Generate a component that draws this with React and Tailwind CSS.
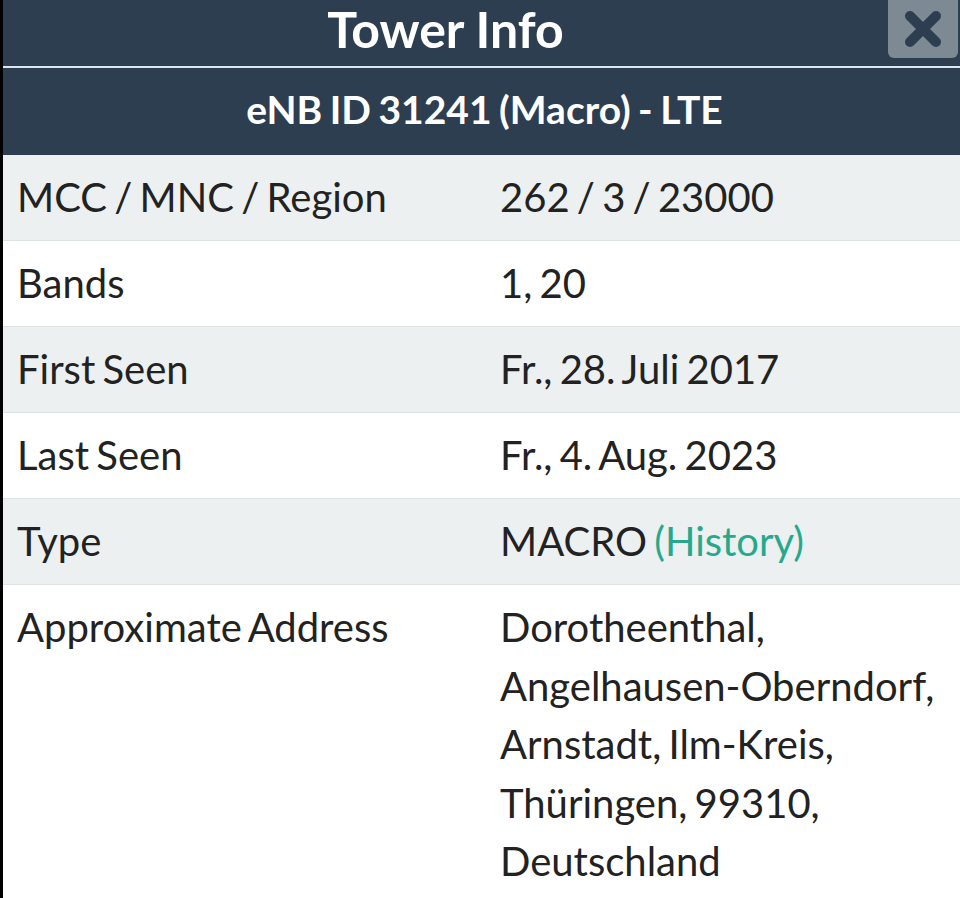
import React from 'react';

const rows = [
  { label: 'MCC / MNC / Region', value: '262 / 3 / 23000' },
  { label: 'Bands', value: '1, 20' },
  { label: 'First Seen', value: 'Fr., 28. Juli 2017' },
  { label: 'Last Seen', value: 'Fr., 4. Aug. 2023' },
  { label: 'Type', value: 'MACRO', link: '(History)' },
  {
    label: 'Approximate Address',
    value: 'Dorotheenthal, Angelhausen-Oberndorf, Arnstadt, Ilm-Kreis, Thüringen, 99310, Deutschland',
  },
];

const App = () => {
  return (
    <div
      className="min-h-screen bg-white border-l-[3px] border-black text-[#222]"
      style={{ fontFamily: 'Lato, "Open Sans", sans-serif' }}
    >
      {/* title bar */}
      <div className="h-[66px] bg-[#2c3e50] flex items-start">
        <h1 className="flex-1 text-center text-[50px] font-bold text-white leading-[58px]">Tower Info</h1>
        <button className="shrink-0 mr-[2px] w-[70px] h-[58px] bg-[#7d8a94] rounded-b-[6px] flex items-center justify-center">
          <svg width="42" height="42" viewBox="0 0 42 42">
            <path
              d="M8 8 L34 34 M34 8 L8 34"
              stroke="#2c3e50"
              strokeWidth="10"
              strokeLinecap="round"
            />
          </svg>
        </button>
      </div>
      <div className="h-[2px] bg-[#dbe6ee]" />

      {/* cell heading */}
      <div className="h-[87px] bg-[#2c3e50] flex items-center justify-center">
        <h2 className="text-[39px] font-bold text-white leading-none -mt-[4px] pl-[6px] [word-spacing:-2px]">
          eNB ID 31241 (Macro) - LTE
        </h2>
      </div>

      {/* details */}
      <div>
        {rows.map((row, i) => (
          <div
            key={row.label}
            className={`grid grid-cols-[483px_1fr] border-b border-[#dde3e5] text-[40px] leading-[58.5px] [word-spacing:-3px] ${
              i % 2 === 0 ? 'bg-[#ecf0f1]' : 'bg-white'
            }`}
          >
            <div className="px-[14px] py-[13.25px]">{row.label}</div>
            <div className="px-[14px] py-[13.25px]">
              {row.value}
              {row.link && <span className="text-[#26a98b]"> {row.link}</span>}
            </div>
          </div>
        ))}
      </div>
    </div>
  );
};

export default App;
